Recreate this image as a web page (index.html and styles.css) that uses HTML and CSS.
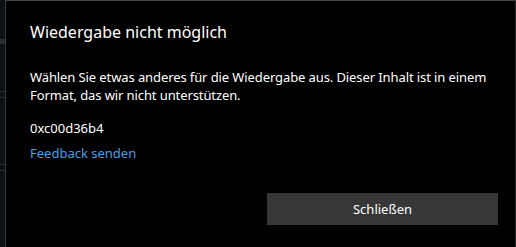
FILE: index.html
```html
<!DOCTYPE html>
<html lang="de">
<head>
<meta charset="utf-8">
<title>Wiedergabe nicht möglich</title>
<link rel="stylesheet" href="styles.css">
</head>
<body>
<div class="backdrop">
  <div class="strip"></div>
  <div class="dialog">
    <h1 class="title">Wiedergabe nicht möglich</h1>
    <p class="message">Wählen Sie etwas anderes für die Wiedergabe aus. Dieser Inhalt ist in einem Format, das wir nicht unterstützen.</p>
    <p class="code">0xc00d36b4</p>
    <a class="link" href="#">Feedback senden</a>
    <div class="actions">
      <button class="btn" type="button">Schließen</button>
    </div>
  </div>
</div>
</body>
</html>
```
FILE: styles.css
```css
html, body {
  margin: 0;
  padding: 0;
  height: 100%;
  overflow: hidden;
  background: #0d1114;
}
.backdrop {
  display: flex;
  height: 100%;
}
.strip {
  width: 5px;
  flex: none;
  background:
    linear-gradient(#0d1114 0 39px, #2a2f33 39px 44px, #0d1114 44px 91px, #2b3034 91px 92px, #0d1114 92px 97px, #2b3034 97px 98px, #0d1114 98px 164px, #2b3034 164px 165px, #0d1114 165px 170px, #2b3034 170px 171px, #0d1114 171px);
}
.dialog {
  flex: 1;
  background: #000;
  border-top: 1px solid #3e4745;
  border-left: 1px solid #3a3a3a;
  border-right: 1px solid #2a2a2a;
  padding: 0 10px 0 24px;
  font-family: "Noto Sans", "Open Sans", sans-serif;
  color: #fff;
}
.title {
  margin: 20px 0 0;
  font-size: 16px;
  font-weight: 400;
  line-height: 22px;
}
.message {
  margin: 25px 0 0;
  font-size: 13px;
  line-height: 18px;
  letter-spacing: -0.1px;
}
.code {
  margin: 15px 0 0;
  font-size: 13px;
  line-height: 18px;
}
.link {
  display: block;
  margin-top: 7px;
  font-size: 13px;
  line-height: 18px;
  color: #4a9fe0;
  text-decoration: none;
}
.actions {
  display: flex;
  justify-content: flex-end;
  margin-top: 31px;
}
.btn {
  width: 231px;
  height: 32px;
  margin-right: 7px;
  padding: 0;
  border: none;
  background: #373737;
  color: #fff;
  font-family: inherit;
  font-size: 13px;
}
```
